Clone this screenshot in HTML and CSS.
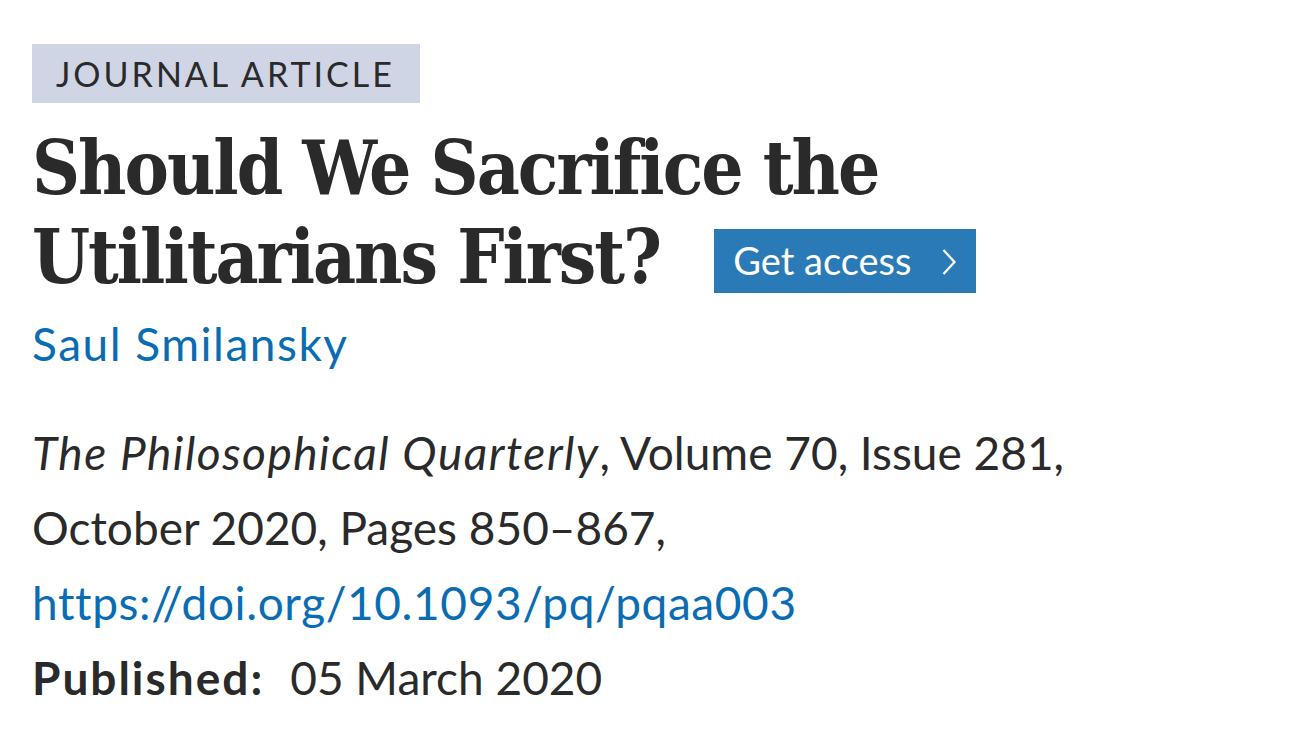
FILE: index.html
```html
<!DOCTYPE html>
<html>
<head>
<meta charset="utf-8">
<link rel="stylesheet" href="styles.css">
</head>
<body>
<main class="article">
  <div class="badge">JOURNAL ARTICLE</div>
  <h1 class="title">Should We Sacrifice the Utilitarians First? <a class="access" href="#"><span class="label">Get access</span><svg class="chev" viewBox="0 0 16 28" width="16" height="28"><path d="M2.5 2 L13.5 14 L2.5 26" fill="none" stroke="#fff" stroke-width="2.3" stroke-linejoin="miter"/></svg></a></h1>
  <a class="author" href="#">Saul Smilansky</a>
  <div class="cite">
    <p><em>The Philosophical Quarterly</em>, Volume 70, Issue 281,</p>
    <p>October 2020, Pages 850–867,</p>
    <p><a class="doi" href="#">https://doi.org/10.1093/pq/pqaa003</a></p>
    <p><strong>Published:</strong><span class="date">05 March 2020</span></p>
  </div>
</main>
</body>
</html>
```
FILE: styles.css
```css
html, body { margin: 0; padding: 0; background: #fff; }
body { font-family: "Lato", "Noto Sans", sans-serif; color: #2a2a2a; }
.article { padding: 44px 0 0 32px; width: 1100px; }
.badge {
  display: inline-block;
  background: #d0d5e5;
  font-size: 34px;
  letter-spacing: 3px;
  line-height: 59px;
  padding: 0 25px 0 24px;
  color: #2a2a2a;
}
.title {
  margin: 21px 0 0;
  font-family: "DejaVu Serif Condensed", "DejaVu Serif", serif;
  font-weight: bold;
  font-size: 74px;
  letter-spacing: -2px;
  line-height: 89px;
  color: #2a2a2a;
  max-width: 980px;
}
.access {
  display: inline-flex;
  align-items: center;
  vertical-align: 8px;
  margin-left: 33px;
  height: 64px;
  padding: 0 18px 0 19px;
  background: #2a7ab8;
  color: #fff;
  text-decoration: none;
  font-family: "Lato", sans-serif;
  font-weight: normal;
  font-size: 38px;
  letter-spacing: 0;
  gap: 30px;
  box-sizing: border-box;
  width: 262px;
}
.chev { flex: none; margin-top: 2px; }
.author {
  display: block;
  margin-top: 12px;
  font-size: 46px;
  letter-spacing: 1.5px;
  line-height: 60px;
  color: #0a6db3;
  text-decoration: none;
}
.cite { margin-top: 41px; font-size: 46px; line-height: 75px; }
.cite p { margin: 0; }
.cite em { letter-spacing: 1.5px; }
.cite strong { letter-spacing: 2px; }
.doi { color: #0a6db3; text-decoration: none; letter-spacing: 0.6px; }
.date { margin-left: 26px; }
```
